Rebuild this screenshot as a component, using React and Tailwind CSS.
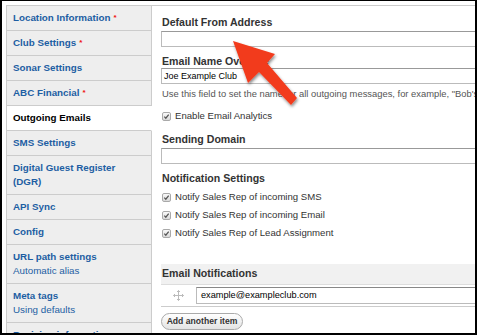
import React from "react";

const tabs = [
  { label: "Location Information", req: true },
  { label: "Club Settings", req: true },
  { label: "Sonar Settings" },
  { label: "ABC Financial", req: true },
  { label: "Outgoing Emails", active: true },
  { label: "SMS Settings" },
  { label: "Digital Guest Register (DGR)" },
  { label: "API Sync" },
  { label: "Config" },
  { label: "URL path settings", sub: "Automatic alias" },
  { label: "Meta tags", sub: "Using defaults" },
  { label: "Revision information" },
];

function Check({ label }) {
  return (
    <div className="flex items-center gap-[4px] h-[18px]">
      <span className="w-[9px] h-[9px] ml-[1px] rounded-[2px] border border-[#a9a9a9] bg-gradient-to-b from-[#fafafa] to-[#d9d9d9] flex items-center justify-center">
        <svg width="7" height="7" viewBox="0 0 8 8">
          <path d="M1.5 4.2 L3.2 6 L6.5 1.8" fill="none" stroke="#555" strokeWidth="1.4" />
        </svg>
      </span>
      <span className="text-[9.6px] text-[#333]">{label}</span>
    </div>
  );
}

export default function App() {
  return (
    <div
      className="relative w-[477px] h-[335px] overflow-hidden bg-white border-2 border-t border-black"
      style={{ fontFamily: '"Liberation Sans", Arial, sans-serif' }}
    >
      <div className="flex pt-[4px] pl-[4px]">
        {/* vertical tabs */}
        <div className="w-[146px] shrink-0 border-t border-[#ccc]">
          {tabs.map((t) => (
            <div
              key={t.label}
              className={`border-l border-b border-[#ccc] px-[6px] py-[5px] leading-[14px] text-[9.8px] ${
                t.active ? "bg-white border-r border-r-white text-black font-bold" : "bg-[#eee] border-r text-[#1d5ea3]"
              }`}
            >
              <div className="font-bold">
                {t.label}
                {t.req && <span className="text-[#e11] text-[8px] align-top ml-[3px]">*</span>}
              </div>
              {t.sub && <div className="font-normal">{t.sub}</div>}
            </div>
          ))}
        </div>

        {/* content pane */}
        <div className="flex-1 border-t border-[#ccc] pl-[9px] pt-[9px] text-[#333]">
          <div className="pl-[1px] text-[10.6px] font-bold leading-[14px]">Default From Address</div>
          <div className="mt-[2px] h-[16px] border border-[#bbb] border-t-[#999]" />

          <div className="mt-[7px] pl-[1px] text-[10.6px] font-bold leading-[14px]">Email Name Override</div>
          <div className="h-[16px] border border-[#bbb] border-t-[#999] pl-[2px] text-[9px] leading-[14px] text-black">
            Joe Example Club
          </div>
          <div className="mt-[3px] pl-[1px] text-[9.4px] leading-[14px] text-[#555] whitespace-nowrap">
            Use this field to set the name for all outgoing messages, for example, "Bob's Health Club"
          </div>

          <div className="mt-[6px]">
            <Check label="Enable Email Analytics" />
          </div>

          <div className="mt-[7px] pl-[1px] text-[10.6px] font-bold leading-[14px]">Sending Domain</div>
          <div className="mt-[2px] h-[16px] border border-[#bbb] border-t-[#999]" />

          <div className="mt-[7px] pl-[1px] text-[10.6px] font-bold leading-[14px]">Notification Settings</div>
          <div className="mt-[3px]">
            <Check label="Notify Sales Rep of incoming SMS" />
            <Check label="Notify Sales Rep of incoming Email" />
            <Check label="Notify Sales Rep of Lead Assignment" />
          </div>

          <div className="mt-[22px]">
            <div className="h-[21px] bg-[#f1f1f1] border-b border-[#ddd] flex items-center pl-[1px] text-[10.6px] font-bold">
              Email Notifications
            </div>
            <div className="h-[22px] border-b border-[#ccc] flex items-center">
              <div className="w-[35px] flex justify-center">
                <svg width="11" height="11" viewBox="0 0 11 11">
                  <path d="M5.5 0.5 V10.5 M0.5 5.5 H10.5" stroke="#bbb" strokeWidth="1" />
                  <path d="M4 2 L5.5 0.5 L7 2 M4 9 L5.5 10.5 L7 9 M2 4 L0.5 5.5 L2 7 M9 4 L10.5 5.5 L9 7" fill="none" stroke="#bbb" strokeWidth="1" />
                </svg>
              </div>
              <div className="flex-1 h-[17px] border border-[#bbb] border-t-[#888] pl-[4px] text-[9.2px] leading-[15px] text-black">
                example@exampleclub.com
              </div>
            </div>
            <button className="mt-[4px] h-[17px] w-[82px] rounded-full border border-[#aaa] bg-gradient-to-b from-white to-[#e3e3e3] text-[8.6px] font-bold text-[#333] leading-[15px]">
              Add another item
            </button>
          </div>
        </div>
      </div>

      {/* callout arrow */}
      <svg className="absolute left-0 top-0" width="477" height="335" viewBox="0 0 477 335">
        <defs>
          <filter id="sh" x="-20%" y="-20%" width="140%" height="140%">
            <feDropShadow dx="1" dy="2" stdDeviation="1.5" floodColor="#000" floodOpacity="0.45" />
          </filter>
        </defs>
        <polygon
          points="231,40 273,53 265,62 295,97 289,104 257,71 246,82"
          fill="#f23b1d"
          filter="url(#sh)"
        />
      </svg>
    </div>
  );
}
